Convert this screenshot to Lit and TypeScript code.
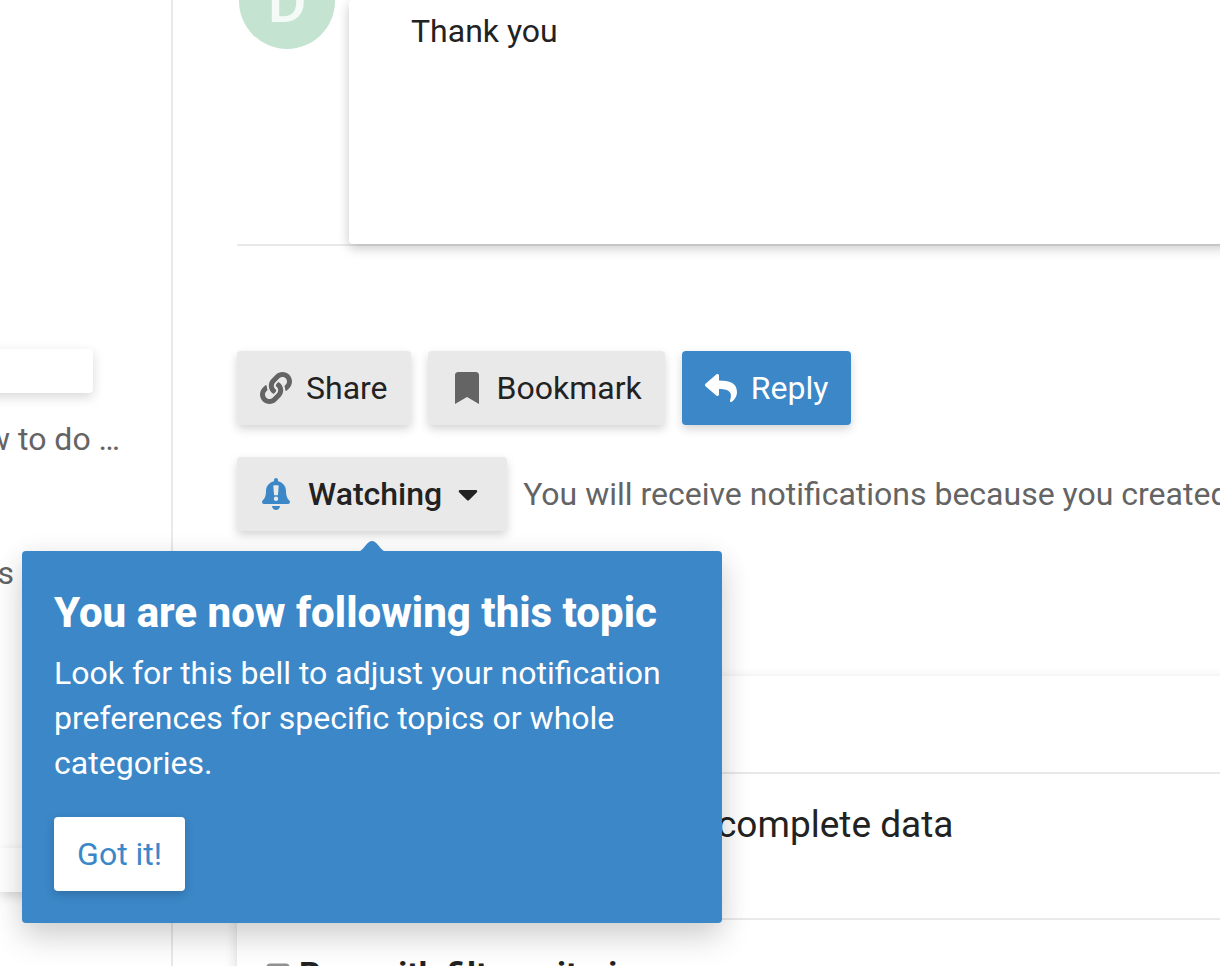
import { LitElement, html, css, svg } from "lit";
import { customElement } from "lit/decorators.js";

const linkIcon = svg`<svg class="icon" viewBox="0 0 512 512" width="32" height="32" aria-hidden="true"><path d="M326.612 185.391c59.747 59.809 58.927 155.698.36 214.59-.11.12-.24.25-.36.37l-67.2 67.2c-59.27 59.27-155.699 59.262-214.96 0-59.27-59.26-59.27-155.7 0-214.96l37.106-37.106c9.84-9.84 26.786-3.3 27.294 10.606.648 17.722 3.826 35.527 9.69 52.721 1.986 5.822.567 12.262-3.783 16.612l-13.087 13.087c-28.026 28.026-28.905 73.66-1.155 101.96 28.024 28.579 74.086 28.749 102.325.51l67.2-67.19c28.191-28.191 28.073-73.757 0-101.83-3.701-3.694-7.429-6.564-10.341-8.569a16.037 16.037 0 0 1-6.947-12.606c-.396-10.567 3.348-21.456 11.698-29.806l21.054-21.055c5.521-5.521 14.182-6.199 20.584-1.731a152.482 152.482 0 0 1 20.522 17.197zM467.547 44.449c-59.261-59.262-155.69-59.27-214.96 0l-67.2 67.2c-.12.12-.25.25-.36.37-58.566 58.892-59.387 154.781.36 214.59a152.454 152.454 0 0 0 20.521 17.196c6.402 4.468 15.064 3.789 20.584-1.731l21.054-21.055c8.35-8.35 12.094-19.239 11.698-29.806a16.037 16.037 0 0 0-6.947-12.606c-2.912-2.005-6.64-4.875-10.341-8.569-28.073-28.073-28.191-73.639 0-101.83l67.2-67.19c28.239-28.239 74.3-28.069 102.325.51 27.75 28.3 26.872 73.934-1.155 101.96l-13.087 13.087c-4.35 4.35-5.769 10.79-3.783 16.612 5.864 17.194 9.042 34.999 9.69 52.721.509 13.906 17.454 20.446 27.294 10.606l37.106-37.106c59.271-59.259 59.271-155.699.001-214.959z"/></svg>`;

const bookmarkIcon = svg`<svg class="icon" viewBox="-64 0 512 512" width="32" height="32" aria-hidden="true"><path d="M0 512V48C0 21.49 21.49 0 48 0h288c26.51 0 48 21.49 48 48v464L192 400 0 512z"/></svg>`;

const replyIcon = svg`<svg class="icon" viewBox="0 0 512 512" width="32" height="32" aria-hidden="true"><path d="M8.309 189.836L184.313 37.851C199.719 24.546 224 35.347 224 56.015v80.053c160.629 1.839 288 34.032 288 186.258 0 61.441-39.581 122.309-83.333 154.132-13.653 9.931-33.111-2.533-28.077-18.631 45.344-145.012-21.507-183.51-176.59-185.742V360c0 20.7-24.3 31.453-39.687 18.164l-176.004-152c-11.071-9.562-11.086-26.753 0-36.328z"/></svg>`;

const bellIcon = svg`<svg class="icon" viewBox="-32 0 512 512" width="32" height="32" aria-hidden="true"><path d="M224 512c35.32 0 63.97-28.65 63.97-64H160.03c0 35.35 28.65 64 63.97 64zm215.39-149.71c-19.32-20.76-55.47-51.99-55.47-154.29 0-77.7-54.48-139.9-127.94-155.16V32c0-17.67-14.32-32-31.98-32s-31.98 14.33-31.98 32v20.84C118.56 68.1 64.08 130.3 64.08 208c0 102.3-36.15 133.53-55.47 154.29-6 6.45-8.66 14.16-8.61 21.71.11 16.4 12.98 32 32.1 32h383.8c19.12 0 32-15.6 32.1-32 .05-7.55-2.61-15.27-8.61-21.71z"/><path class="mark" d="M196 116h56c9 0 16 8 15 17l-11 130c-1 8-7 14-15 14h-34c-8 0-14-6-15-14l-11-130c-1-9 6-17 15-17z"/><circle class="mark" cx="224" cy="332" r="35"/></svg>`;

const caretIcon = svg`<svg class="icon" viewBox="0 0 320 512" width="20" height="32" aria-hidden="true"><path d="M31.3 192h257.3c17.8 0 26.7 21.5 14.1 34.1L174.1 354.7c-7.8 7.8-20.5 7.8-28.3 0L17.2 226.1C4.6 213.5 13.4 192 31.3 192z"/></svg>`;

const boxIcon = svg`<svg class="box" viewBox="0 0 24 24" width="24" height="24" aria-hidden="true"><rect x="2" y="2" width="20" height="20" rx="2"/></svg>`;

const arrow = svg`<svg class="arrow" viewBox="0 0 16 6" width="32" height="12" aria-hidden="true"><path d="M0 6s1.796-.013 4.67-3.615C5.851.9 6.93.006 8 0c1.07-.006 2.148.887 3.343 2.385C14.233 6.005 16 6 16 6H0z"/></svg>`;

@customElement("app-root")
export class AppRoot extends LitElement {
  static styles = css`
    :host {
      --primary: #222;
      --medium: #646464;
      --low: #e9e9e9;
      --accent: #3b87c8;
      display: grid;
      grid-template-columns: 171px minmax(0, 1fr);
      height: 100vh;
      overflow: hidden;
      background: #fff;
      color: var(--primary);
      font: 400 32px/45px Roboto, sans-serif;
    }
    * { box-sizing: border-box; }
    aside {
      display: flex;
      flex-direction: column;
      align-items: flex-end;
      overflow: hidden;
      white-space: nowrap;
      color: var(--medium);
    }
    .chip {
      flex: none;
      width: 100%;
      height: 44px;
      border-radius: 0 4px 4px 0;
      background: #fff;
      box-shadow: 0 4px 12px rgba(0, 0, 0, 0.16);
    }
    .first { margin: 349px 78px 24px 0; }
    .second { margin-top: 252px; }
    .side { margin: 0 51px 0 0; }
    .end { margin: 89px 157px 0 0; }
    main {
      min-width: 0;
      padding-left: 64px;
      border-left: 2px solid var(--low);
    }
    .post {
      display: flex;
      align-items: flex-start;
      gap: 14px;
      height: 246px;
      border-bottom: 2px solid var(--low);
    }
    .avatar {
      flex: none;
      display: flex;
      align-items: center;
      justify-content: center;
      width: 96px;
      height: 96px;
      margin: -47px 0 0 2px;
      border-radius: 50%;
      background: #c5e3d1;
      color: rgba(255, 255, 255, 0.8);
      font-size: 60px;
      font-weight: 500;
    }
    .card {
      flex: 1;
      height: 244px;
      margin-right: -16px;
      padding: 9px 62px;
      border-radius: 4px;
      background: #fff;
      box-shadow: 0 4px 12px rgba(0, 0, 0, 0.22);
    }
    p { margin: 0; }
    .actions {
      display: flex;
      gap: 17px;
      margin-top: 105px;
    }
    button {
      display: flex;
      flex: none;
      align-items: center;
      gap: 14px;
      height: 74px;
      padding: 0 23px;
      border: 0;
      border-radius: 4px;
      background: var(--low);
      box-shadow: 0 4px 10px rgba(0, 0, 0, 0.17);
      color: var(--primary);
      font: inherit;
      white-space: nowrap;
    }
    .icon { flex: none; fill: var(--medium); }
    .reply { background: var(--accent); color: #fff; }
    .reply .icon { fill: #fff; }
    .watch { font-weight: 500; gap: 16px; padding-right: 29px; }
    .watch .icon { fill: var(--accent); }
    .watch .icon:last-child { fill: var(--primary); }
    .watch .mark { fill: var(--low); }
    .notify {
      display: flex;
      align-items: center;
      gap: 16px;
      margin-top: 32px;
      color: var(--medium);
      white-space: nowrap;
    }
    .anchor { position: relative; flex: none; }
    .tip {
      position: absolute;
      z-index: 1;
      top: calc(100% + 20px);
      left: 50%;
      width: 700px;
      padding: 32px;
      border-radius: 4px;
      transform: translateX(-50%);
      background: var(--accent);
      box-shadow: 0 16px 32px rgba(0, 0, 0, 0.14), 0 4px 28px rgba(0, 0, 0, 0.08);
      color: #fff;
      white-space: normal;
    }
    .arrow {
      position: absolute;
      bottom: calc(100% - 2px);
      left: calc(50% - 16px);
      fill: var(--accent);
    }
    h2 {
      margin: 0 0 8px;
      font-size: 42px;
      line-height: 60px;
      font-weight: 800;
    }
    .tip button {
      margin-top: 31px;
      background: #fff;
      color: var(--accent);
    }
    .related {
      margin: 145px -16px 0 0;
      box-shadow: 0 4px 12px rgba(0, 0, 0, 0.16);
    }
    .head { height: 98px; border-bottom: 2px solid var(--low); }
    .row {
      height: 146px;
      padding: 28px 0 0 480px;
      border-bottom: 2px solid var(--low);
      font-size: 37px;
    }
    .result {
      display: flex;
      align-items: center;
      gap: 9px;
      padding: 32px 29px;
      font-size: 34px;
      font-weight: 700;
    }
    a { color: inherit; text-decoration: none; }
    .box { flex: none; fill: none; stroke: #919191; stroke-width: 3; }
  `;

  render() {
    return html`
      <aside>
        <div class="chip first"></div>
        <p class="side">w to do …</p>
        <p class="end">s</p>
        <div class="chip second"></div>
      </aside>
      <main>
        <article class="post">
          <div class="avatar">D</div>
          <div class="card"><p>Thank you</p></div>
        </article>
        <div class="actions">
          <button type="button">${linkIcon}<span>Share</span></button>
          <button type="button">${bookmarkIcon}<span>Bookmark</span></button>
          <button type="button" class="reply">${replyIcon}<span>Reply</span></button>
        </div>
        <div class="notify">
          <div class="anchor">
            <button type="button" class="watch">${bellIcon}<span>Watching</span>${caretIcon}</button>
            <div class="tip" role="dialog" aria-labelledby="tip-title">
              ${arrow}
              <h2 id="tip-title">You are now following this topic</h2>
              <p>Look for this bell to adjust your notification preferences for specific topics or whole categories.</p>
              <button type="button">Got it!</button>
            </div>
          </div>
          <p>You will receive notifications because you created</p>
        </div>
        <section class="related">
          <div class="head"></div>
          <div class="row"><a href="#data">complete data</a></div>
          <div class="result">${boxIcon}<a href="#filter">Row with filter criteria</a></div>
        </section>
      </main>
    `;
  }
}
